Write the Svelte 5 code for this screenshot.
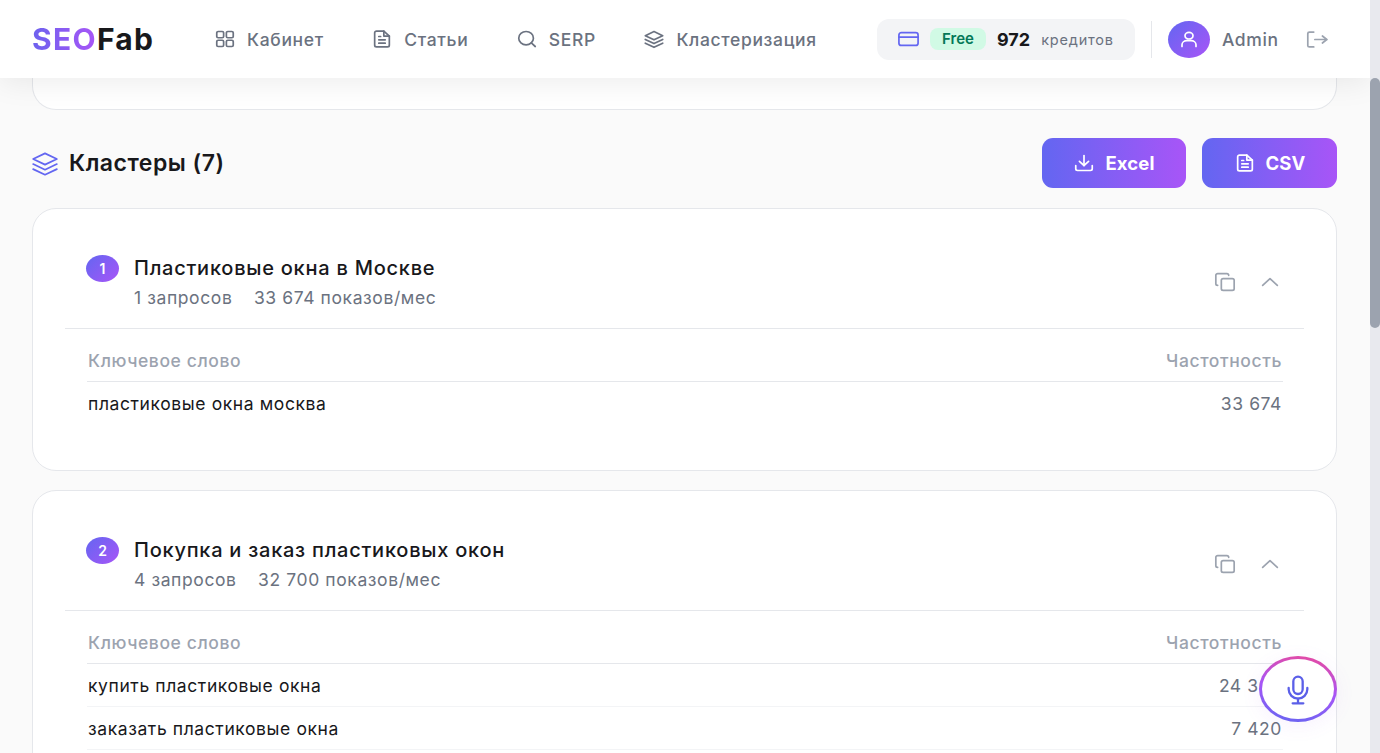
<script>
  const nav = [
    { label: 'Кабинет', icon: 'grid' },
    { label: 'Статьи', icon: 'doc' },
    { label: 'SERP', icon: 'search' },
    { label: 'Кластеризация', icon: 'layers' }
  ];

  const clusters = [
    {
      id: 1,
      title: 'Пластиковые окна в Москве',
      count: '1 запросов',
      shows: '33 674 показов/мес',
      rows: [['пластиковые окна москва', '33 674']]
    },
    {
      id: 2,
      title: 'Покупка и заказ пластиковых окон',
      count: '4 запросов',
      shows: '32 700 показов/мес',
      rows: [
        ['купить пластиковые окна', '24 300'],
        ['заказать пластиковые окна', '7 420']
      ]
    }
  ];
</script>

{#snippet icon(name)}
  <svg class="ico" viewBox="0 0 24 24" preserveAspectRatio="none" fill="none" stroke="currentColor" stroke-width="1.7" stroke-linecap="round" stroke-linejoin="round">
    {#if name === 'grid'}
      <rect x="3" y="3" width="7.5" height="7.5" rx="1.5" /><rect x="13.5" y="3" width="7.5" height="7.5" rx="1.5" />
      <rect x="3" y="13.5" width="7.5" height="7.5" rx="1.5" /><rect x="13.5" y="13.5" width="7.5" height="7.5" rx="1.5" />
    {:else if name === 'doc'}
      <path d="M14 2.500H6a2 2 0 0 0-2 2v15a2 2 0 0 0 2 2h12a2 2 0 0 0 2-2V8.500z" /><path d="M14 2.500V8.500h6" /><path d="M8.500 13h7M8.500 17h7M8.500 9h2" />
    {:else if name === 'search'}
      <circle cx="11" cy="11" r="8" /><path d="m21 21-4.300-4.300" />
    {:else if name === 'layers'}
      <path d="M12 3 2.500 8 12 13l9.500-5z" /><path d="m2.500 12.500 9.500 5 9.500-5" /><path d="m2.500 17 9.500 5 9.500-5" />
    {:else if name === 'card'}
      <rect x="2" y="5" width="20" height="14" rx="2.500" /><path d="M2 10h20" />
    {:else if name === 'user'}
      <circle cx="12" cy="8" r="4" /><path d="M5 21v-2a5 5 0 0 1 5-5h4a5 5 0 0 1 5 5v2" />
    {:else if name === 'logout'}
      <path d="M9 3.500H5a1.500 1.500 0 0 0-1.500 1.500v14A1.500 1.500 0 0 0 5 20.500h4" /><path d="M10 12h11" /><path d="m17 8 4 4-4 4" />
    {:else if name === 'download'}
      <path d="M21 15v4a2 2 0 0 1-2 2H5a2 2 0 0 1-2-2v-4" /><path d="m7 10 5 5 5-5" /><path d="M12 15V3" />
    {:else if name === 'copy'}
      <rect x="8" y="8" width="14" height="14" rx="2" /><path d="M4 16a2 2 0 0 1-2-2V4a2 2 0 0 1 2-2h10a2 2 0 0 1 2 2" />
    {:else if name === 'chevron'}
      <path d="m4 16 8-8 8 8" />
    {:else if name === 'mic'}
      <path d="M12 2a3.500 3.500 0 0 0-3.500 3.500v6a3.500 3.500 0 0 0 7 0v-6A3.500 3.500 0 0 0 12 2z" /><path d="M19 10.500v1a7 7 0 0 1-14 0v-1" /><path d="M12 18.500V22M8 22h8" />
    {/if}
  </svg>
{/snippet}

<div class="shell">
  <div class="view">
    <header class="topbar">
      <div class="logo"><span class="seo">SEO</span>Fab</div>
      <nav class="nav">
        {#each nav as item}
          <span class="nav-item"><span class="nav-ico">{@render icon(item.icon)}</span>{item.label}</span>
        {/each}
      </nav>
      <div class="credits">
        <span class="card-ico">{@render icon('card')}</span>
        <span class="plan">Free</span>
        <b class="amount">972</b>
        <span class="unit">кредитов</span>
      </div>
      <div class="sep"></div>
      <div class="avatar"><span class="user-ico">{@render icon('user')}</span></div>
      <span class="name">Admin</span>
      <span class="logout">{@render icon('logout')}</span>
    </header>

    <main class="page">
      <div class="stats"></div>

      <div class="section">
        <span class="section-ico">{@render icon('layers')}</span>
        <h2>Кластеры (7)</h2>
        <div class="exports">
          <button class="excel"><span class="btn-ico">{@render icon('download')}</span>Excel</button>
          <button class="csv"><span class="btn-ico">{@render icon('doc')}</span>CSV</button>
        </div>
      </div>

      {#each clusters as c}
        <section class="cluster" class:single={c.rows.length === 1}>
          <div class="head">
            <span class="badge">{c.id}</span>
            <div class="info">
              <h3>{c.title}</h3>
              <p><span>{c.count}</span><span>{c.shows}</span></p>
            </div>
            <span class="act copy">{@render icon('copy')}</span>
            <span class="act chev">{@render icon('chevron')}</span>
          </div>
          <div class="table">
            <div class="row th"><span>Ключевое слово</span><span>Частотность</span></div>
            {#each c.rows as r}
              <div class="row"><span class="kw">{r[0]}</span><span class="freq">{r[1]}</span></div>
            {/each}
          </div>
        </section>
      {/each}
    </main>

    <div class="mic">{@render icon('mic')}</div>
  </div>
  <div class="track"><div class="thumb"></div></div>
</div>

<style>
  :global(body) {
    margin: 0;
    overflow: hidden;
    font-family: Inter, "Noto Sans", sans-serif;
    background: #fafafa;
  }

  .shell {
    display: flex;
    height: 753px;
    overflow: hidden;
  }

  .view {
    position: relative;
    flex: 1;
    min-width: 0;
    overflow: hidden;
  }

  .track {
    width: 10px;
    background: #e8e9ee;
    flex: none;
  }

  .thumb {
    margin-top: 78px;
    height: 250px;
    background: #9ca3af;
    border-radius: 5px;
  }

  .ico {
    display: block;
    width: 100%;
    height: 100%;
  }

  /* icons are stretched, keep their lines even */
  .ico :global(*) {
    vector-effect: non-scaling-stroke;
  }

  /* header lies over the scrolled page */
  .topbar {
    position: absolute;
    top: 0;
    left: 0;
    right: 0;
    z-index: 5;
    height: 78px;
    box-sizing: border-box;
    display: flex;
    align-items: center;
    padding: 0 40px 0 32px;
    background: #fff;
    box-shadow: 0 4px 30px rgba(0, 0, 0, 0.08);
  }

  .logo {
    width: 184px;
    flex: none;
    font-size: 30px;
    font-weight: 700;
    letter-spacing: 1.3px;
    color: #18181b;
  }

  .seo {
    background: linear-gradient(90deg, #6d62ee, #a855f7);
    -webkit-background-clip: text;
    background-clip: text;
    color: transparent;
  }

  .nav {
    display: flex;
    flex: 1;
    gap: 49.5px;
  }

  .nav-item {
    display: flex;
    align-items: center;
    gap: 11px;
    font-size: 17.5px;
    font-weight: 500;
    letter-spacing: 0.65px;
    color: #6b7280;
  }

  .nav-ico {
    width: 22px;
    height: 20px;
    margin-left: -2px;
    flex: none;
  }

  .credits {
    display: flex;
    align-items: center;
    width: 258px;
    height: 41px;
    box-sizing: border-box;
    padding-left: 20px;
    border-radius: 12px;
    background: #f3f4f6;
    flex: none;
  }

  .card-ico {
    width: 23px;
    height: 22px;
    color: #6366f1;
    margin-right: 10px;
  }

  .plan {
    width: 56px;
    height: 22px;
    border-radius: 8px;
    background: #d1fae5;
    color: #047857;
    font-size: 15px;
    font-weight: 600;
    line-height: 22px;
    text-align: center;
    margin-right: 11px;
  }

  .amount {
    font-size: 18px;
    font-weight: 700;
    color: #18181b;
    margin-right: 11px;
  }

  .unit {
    font-size: 14.5px;
    letter-spacing: 0.8px;
    color: #6b7280;
  }

  .sep {
    width: 1px;
    height: 37px;
    margin: 0 16px;
    background: #e5e7eb;
    flex: none;
  }

  .avatar {
    width: 42px;
    height: 37px;
    border-radius: 50%;
    background: linear-gradient(135deg, #6366f1, #a855f7);
    display: flex;
    align-items: center;
    justify-content: center;
    color: #fff;
    flex: none;
  }

  .user-ico {
    width: 24px;
    height: 20px;
  }

  .name {
    width: 58px;
    margin-left: 12px;
    font-size: 17.5px;
    font-weight: 500;
    letter-spacing: 0.6px;
    color: #6b7280;
    flex: none;
  }

  .logout {
    margin-left: 24px;
    width: 26px;
    height: 21px;
    color: #9ca3af;
    flex: none;
  }

  .page {
    padding: 0 33px 0 32px;
  }

  .stats {
    height: 109.5px;
    box-sizing: border-box;
    background: #fff;
    border: 1px solid #e5e7eb;
    border-top: 0;
    border-radius: 0 0 24px 24px;
  }

  .section {
    display: flex;
    align-items: center;
    height: 50px;
    margin: 28.5px 0 20px;
  }

  .section-ico {
    width: 30px;
    height: 27px;
    margin-left: -2px;
    margin-right: 9px;
    color: #6366f1;
  }

  h2 {
    margin: 0;
    flex: 1;
    font-size: 23px;
    font-weight: 600;
    letter-spacing: 0.5px;
    color: #18181b;
  }

  .exports {
    display: flex;
    gap: 16px;
  }

  button {
    display: flex;
    align-items: center;
    justify-content: center;
    gap: 10px;
    height: 50px;
    border: 0;
    border-radius: 11px;
    background: linear-gradient(90deg, #6366f1, #a855f7);
    color: #fff;
    font-family: inherit;
    font-size: 18.5px;
    font-weight: 700;
    letter-spacing: 0.1px;
  }

  .excel {
    width: 144px;
  }

  .csv {
    width: 135px;
  }

  .btn-ico {
    width: 22px;
    height: 20px;
  }

  .cluster {
    box-sizing: border-box;
    margin-bottom: 19px;
    padding: 46px 32px 45px;
    background: #fff;
    border: 1px solid #e5e7eb;
    border-radius: 24px;
  }

  .head {
    display: flex;
    align-items: flex-start;
    height: 74px;
    padding: 0 0 0 21px;
    border-bottom: 1px solid #e5e7eb;
    box-sizing: border-box;
  }

  .badge {
    width: 33px;
    height: 27px;
    margin-right: 15px;
    border-radius: 50%;
    background: linear-gradient(135deg, #6366f1, #a855f7);
    color: #fff;
    font-size: 14px;
    font-weight: 600;
    line-height: 27px;
    text-align: center;
    flex: none;
  }

  .info {
    flex: 1;
    margin-top: 1px;
  }

  h3 {
    margin: 0;
    font-size: 20px;
    font-weight: 500;
    line-height: 24px;
    letter-spacing: 0.75px;
    color: #18181b;
  }

  p {
    display: flex;
    gap: 21.5px;
    margin: 8px 0 0;
    font-size: 17.5px;
    line-height: 20px;
    letter-spacing: 0.6px;
    color: #6b7280;
  }

  .act {
    width: 22px;
    height: 20px;
    margin-top: 17px;
    color: #9ca3af;
    flex: none;
  }

  .chev {
    margin-left: 23px;
    margin-right: 23px;
  }

  .table {
    padding: 0 21px 0 22px;
  }

  .row {
    display: flex;
    justify-content: space-between;
    align-items: center;
    height: 43px;
    box-sizing: border-box;
    padding: 0 1px;
    border-bottom: 1px solid #f3f4f6;
    font-size: 17.5px;
    letter-spacing: 0.6px;
    color: #18181b;
  }

  .single .row:last-child {
    border-bottom: 0;
  }

  .th {
    height: 53px;
    padding-top: 10px;
    border-bottom-color: #e5e7eb;
    color: #9ca3af;
    font-weight: 500;
  }

  .freq {
    color: #6b7280;
  }

  /* voice button floats over the page */
  .mic {
    position: absolute;
    left: 1259px;
    top: 656px;
    z-index: 6;
    width: 78px;
    height: 66px;
    box-sizing: border-box;
    padding: 15px 20px 13px;
    border: 3.5px solid transparent;
    border-radius: 50%;
    background:
      linear-gradient(#fff, #fff) padding-box,
      linear-gradient(190deg, #ec4899, #a855f7 50%, #6366f1) border-box;
    box-shadow: 0 4px 20px rgba(168, 85, 247, 0.08);
    color: #5b5fe8;
  }

  .mic :global(.ico *) {
    stroke-width: 2.3;
  }
</style>
